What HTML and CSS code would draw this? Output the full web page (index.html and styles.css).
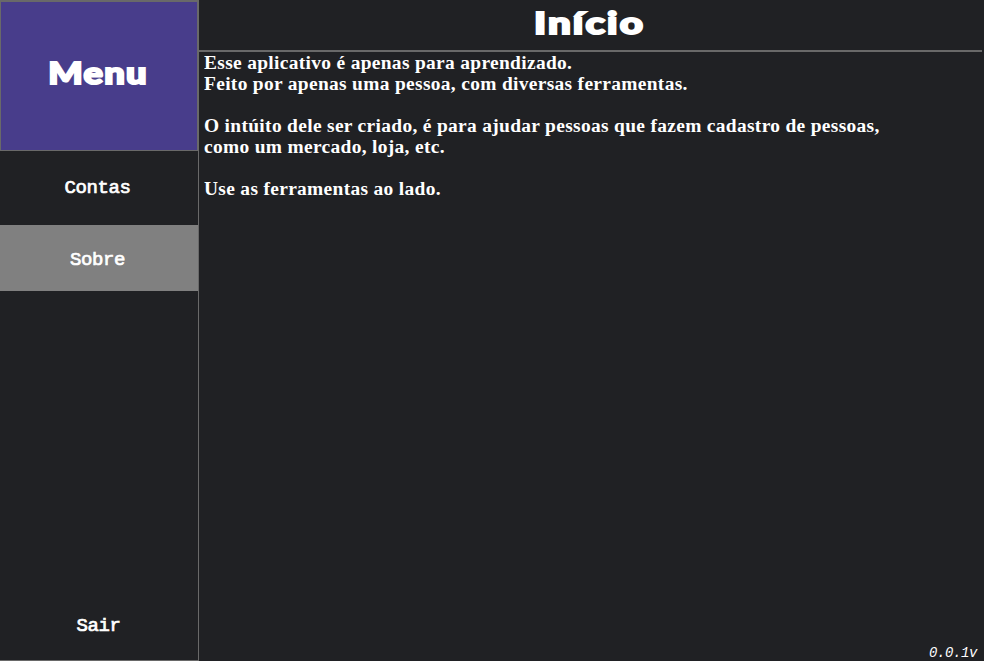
FILE: index.html
```html
<!DOCTYPE html>
<html lang="pt-BR">
<head>
<meta charset="utf-8">
<title>Início</title>
<link rel="stylesheet" href="styles.css">
</head>
<body>
<div class="app">
  <nav class="sidebar">
    <div class="brand"><span class="brand-text">Menu</span></div>
    <a class="item">Contas</a>
    <a class="item active">Sobre</a>
    <a class="item exit">Sair</a>
  </nav>
  <main class="content">
    <h1 class="title"><span class="title-text">Início</span></h1>
    <div class="about">
      <p>Esse aplicativo é apenas para aprendizado.<br>Feito por apenas uma pessoa, com diversas ferramentas.</p>
      <p>O intúito dele ser criado, é para ajudar pessoas que fazem cadastro de pessoas,<br>como um mercado, loja, etc.</p>
      <p>Use as ferramentas ao lado.</p>
    </div>
    <footer class="version">0.0.1v</footer>
  </main>
</div>
</body>
</html>
```
FILE: styles.css
```css
* { box-sizing: border-box; }
body { margin: 0; background: #202124; color: #fff; overflow: hidden; }
.app { display: flex; width: 984px; height: 661px; }
.sidebar {
  display: flex;
  flex-direction: column;
  width: 199px;
  border-right: 1px solid #696969;
  border-bottom: 1px solid #696969;
}
.brand {
  display: flex;
  align-items: center;
  justify-content: center;
  height: 151px;
  background: #483d8b;
  border: 1px solid #696969;
  border-top-width: 2px;
  margin-bottom: 2px;
}
.brand-text, .title-text {
  display: inline-block;
  font-family: Lato, "Open Sans", sans-serif;
  font-weight: 900;
  font-size: 30px;
  line-height: 40px;
  -webkit-text-stroke: 2px #fff;
  white-space: nowrap;
}
.brand-text { letter-spacing: 1px; transform: translate(-1px, -4px) scaleX(1.21); }
.item {
  display: flex;
  align-items: center;
  justify-content: center;
  height: 66px;
  margin-bottom: 6px;
  padding: 4px 3px 0 0;
  font: 19px "Liberation Mono", monospace;
  -webkit-text-stroke: 0.7px #fff;
  letter-spacing: -0.4px;
}
.active { background: #808080; }
.exit { margin-top: auto; margin-bottom: 3px; padding-right: 1px; }
.content { display: flex; flex-direction: column; flex: 1; }
.title {
  display: flex;
  align-items: center;
  justify-content: center;
  height: 52px;
  margin: 0 2px 0 0;
  border-bottom: 2px solid #696969;
}
.title-text { letter-spacing: 1.6px; transform: translate(-1px, -3px) scaleX(1.34); }
.about {
  align-self: flex-start;
  padding: 1px 0 0 5px;
  font: bold 18px/21px "Liberation Serif", serif;
  letter-spacing: 0.3px;
  white-space: nowrap;
  transform: scaleX(1.079);
  transform-origin: 5px 0;
}
.about p { margin: 0 0 21px; }
.version {
  margin: auto 7px 0 0;
  text-align: right;
  font: italic 14px/15px "Liberation Mono", monospace;
  letter-spacing: -0.4px;
}
```
